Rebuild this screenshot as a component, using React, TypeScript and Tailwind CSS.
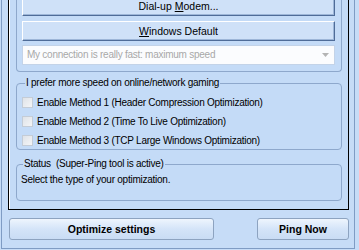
import React from "react";

const font = "font-['Tahoma','Liberation_Sans',Arial,sans-serif]";
const lbl = "text-[10px] tracking-[-0.25px]";

function Btn3D({ children, className = "" }: { children: React.ReactNode; className?: string }) {
  return (
    <div
      className={`h-[20px] w-[313px] flex items-center justify-center text-[10.5px] text-black bg-[#cfe1f8] border border-t-white border-l-white border-r-[#4f6c98] border-b-[#4f6c98] shadow-[inset_-1px_-1px_0_#9db6d8] ${className}`}
    >
      {children}
    </div>
  );
}

function Check({ label }: { label: string }) {
  return (
    <div className="flex items-center h-[19px]">
      <div className="w-[11px] h-[11px] border border-[#c4ccd6] bg-gradient-to-br from-[#dfe3e8] to-[#f4f5f7]" />
      <span className={`ml-[4px] ${lbl} text-black`}>{label}</span>
    </div>
  );
}

export default function App() {
  return (
    <div className={`w-[359px] h-[250px] overflow-hidden bg-[#c6dcf7] ${font} leading-none`}>
      <div className="ml-[1px] -mt-[20px] w-[354px] h-[269px] border-x border-b border-[#7f9cc4] pl-[6px] flex flex-col">
        {/* main panel */}
        <div className="w-[341px] h-[230px] border-x border-b border-black shadow-[inset_1px_0_0_#ffffff] pl-[7px] flex flex-col bg-[#c4dbf7]">
          {/* group 1 */}
          <div className="mt-[6px] w-[326px] h-[86px] border border-t-0 border-[#8ea8cc] rounded-b-[4px] pl-[5px] pt-[10px] flex flex-col">
            <Btn3D>
              <span>
                Dial-up <span className="underline">M</span>odem...
              </span>
            </Btn3D>
            <Btn3D className="mt-[5px]">
              <span>
                <span className="underline">W</span>indows Default
              </span>
            </Btn3D>
            <div className="mt-[4px] w-[313px] h-[20px] bg-[#fbfcfe] border border-[#c3d3e8] flex items-center pl-[4px] pr-[5px]">
              <span className={`${lbl} text-[#a8a8a8] flex-1`}>My connection is really fast: maximum speed</span>
              <svg width="7" height="4" viewBox="0 0 7 4">
                <path d="M0 0h7L3.5 4z" fill="#b4b4b4" />
              </svg>
            </div>
          </div>
          {/* group 2 */}
          <fieldset className="mt-[5px] w-[326px] h-[73px] border border-[#8ea8cc] rounded-[4px] pl-[5px] pt-[4px]">
            <legend className={`ml-[3px] px-[1px] ${lbl} text-black leading-[12px]`}>I prefer more speed on online/network gaming</legend>
            <Check label="Enable Method 1 (Header Compression Optimization)" />
            <Check label="Enable Method 2 (Time To Live Optimization)" />
            <Check label="Enable Method 3 (TCP Large Windows Optimization)" />
          </fieldset>
          {/* status */}
          <fieldset className="mt-[8px] w-[326px] h-[43px] border border-[#8ea8cc] rounded-[4px] pl-[4px] pt-[5px]">
            <legend className={`ml-[2px] px-[1px] ${lbl} text-black leading-[12px] whitespace-pre`}>Status  (Super-Ping tool is active)</legend>
            <div className={`${lbl} text-black`}>Select the type of your optimization.</div>
          </fieldset>
        </div>
        {/* bottom buttons */}
        <div className="mt-[8px] pl-[1px] flex items-center">
          <div className="w-[205px] h-[22px] rounded-[3px] border border-[#8da3c0] bg-gradient-to-b from-[#eef5fd] via-[#d4e4f8] to-[#c9dcf4] flex items-center justify-center text-[10.5px] font-bold text-black">
            Optimize settings
          </div>
          <div className="ml-[43px] w-[92px] h-[22px] rounded-[3px] border border-[#8da3c0] bg-gradient-to-b from-[#eef5fd] via-[#d4e4f8] to-[#c9dcf4] flex items-center justify-center text-[10.5px] font-bold text-black">
            Ping Now
          </div>
        </div>
      </div>
    </div>
  );
}
